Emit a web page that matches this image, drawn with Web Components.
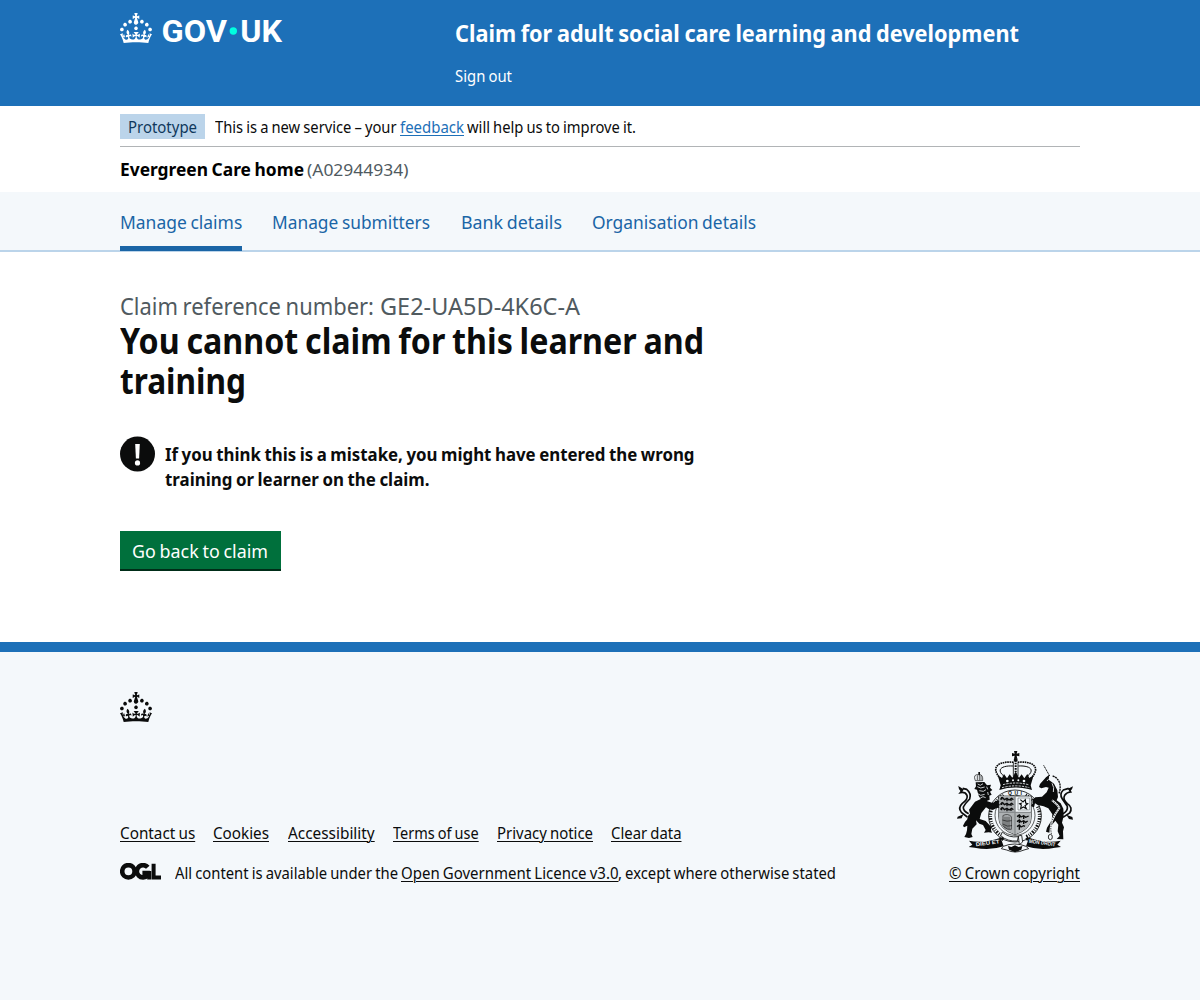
<!DOCTYPE html>
<html lang="en">
<head>
<meta charset="utf-8">
<title>You cannot claim for this learner and training</title>
<style>
  html, body { margin: 0; background: #f4f8fb; }
  body { font-family: "Noto Sans", "Liberation Sans", sans-serif; color: #0b0c0c; font-size: 16px; line-height: 20px; }
</style>
</head>
<body>
<claim-page></claim-page>
<script>
const define = (name, html, setup) => {
  const t = document.createElement('template');
  t.innerHTML = html;
  customElements.define(name, class extends HTMLElement {
    constructor() { super(); this.attachShadow({ mode: 'open' }).append(t.content.cloneNode(true)); }
    connectedCallback() { if (setup) setup(this, this.shadowRoot); }
  });
};

/* A single line of text condensed to a given advance width. */
define('fitted-text', `
<style>
  :host { display: inline-block; white-space: nowrap; word-spacing: -.05em; }
  span { display: inline-block; transform-origin: 0 50%; vertical-align: top; }
  :host([link]) span { text-decoration: underline; text-decoration-thickness: 1px; text-underline-offset: 2px; }
</style><span><slot></slot></span>`, (el, root) => {
  const w = +el.getAttribute('w');
  const span = root.querySelector('span');
  span.style.transform = `scaleX(${w / span.getBoundingClientRect().width})`;
  el.style.width = w + 'px';
});

define('crown-icon', `
<style>:host { display: block; width: 32px; height: 30px; } svg { display: block; }</style>
<svg width="32" height="30" viewBox="0 0 32 30" fill="currentColor"><path d="M22.6 10.4c-1 .4-2-.1-2.4-1-.4-.9.1-2 1-2.4.9-.4 2 .1 2.4 1s-.1 2-1 2.4m-5.9 6.7c-.9.4-2-.1-2.4-1-.4-.9.1-2 1-2.4.9-.4 2 .1 2.4 1s-.1 2-1 2.4m10.8-3.7c-1 .4-2-.1-2.4-1-.4-.9.1-2 1-2.4.9-.4 2 .1 2.4 1s0 2-1 2.4m3.3 4.8c-1 .4-2-.1-2.4-1-.4-.9.1-2 1-2.4.9-.4 2 .1 2.4 1s-.1 2-1 2.4M17 4.7l2.3 1.2V2.5l-2.3.7-.2-.2.9-3h-3.4l.9 3-.2.2c-.1.1-2.3-.7-2.3-.7v3.4L15 4.7c.1.1.1.2.2.2l-1.3 4c-.1.2-.1.4-.1.6 0 1.1.8 2 1.9 2.2h.7c1-.2 1.9-1.1 1.9-2.1 0-.2 0-.4-.1-.6l-1.3-4c-.1-.2 0-.2.1-.3m-7.6 5.7c.9.4 2-.1 2.4-1 .4-.9-.1-2-1-2.4-.9-.4-2 .1-2.4 1s0 2 1 2.4m-5 3c.9.4 2-.1 2.4-1 .4-.9-.1-2-1-2.4-.9-.4-2 .1-2.4 1s.1 2 1 2.4m-3.2 4.8c.9.4 2-.1 2.4-1 .4-.9-.1-2-1-2.4-.9-.4-2 .1-2.4 1s0 2 1 2.4m14.8 11c4.4 0 8.6.3 12.3.8 1.1-4.5 2.4-7 3.7-8.8l-2.5-.9c.2 1.3.3 1.9 0 2.7-.4-.4-.8-1.1-1.1-2.3l-1.2 4c.7-.5 1.3-.8 2-.9-1.1 2.5-2.6 3.1-3.5 3-1.1-.2-1.7-1.2-1.5-2.1.3-1.2 1.5-1.5 2.1-.1 1.1-2.3-.8-3-2-2.3 1.9-1.9 2.1-3.5.6-5.6-2.1 1.6-2.1 3.2-1.2 5.5-1.2-1.4-3.2-.6-2.5 1.6.9-1.4 2.1-.5 1.9.8-.2 1.1-1.7 2.1-3.5 1.9-2.7-.2-2.9-2.1-2.9-3.6.7-.1 1.9.5 2.9 1.9l.4-4.3c-1.1 1.1-2.1 1.4-3.2 1.4.4-1.2 2.1-3 2.1-3h-5.4s1.7 1.9 2.1 3c-1.1 0-2.1-.2-3.2-1.4l.4 4.3c1-1.4 2.2-2 2.9-1.9-.1 1.5-.2 3.4-2.9 3.6-1.9.2-3.4-.8-3.5-1.9-.2-1.3 1-2.2 1.9-.8.7-2.3-1.2-3-2.5-1.6.9-2.2.9-3.9-1.2-5.5-1.5 2-1.3 3.7.6 5.6-1.2-.7-3.1 0-2 2.3.6-1.4 1.8-1.1 2.1.1.2.9-.3 1.9-1.5 2.1-.9.2-2.4-.5-3.5-3 .6 0 1.2.3 2 .9l-1.2-4c-.3 1.1-.7 1.9-1.1 2.3-.3-.8-.2-1.4 0-2.7l-2.9.9C1.3 23 2.6 25.5 3.7 30c3.7-.5 7.9-.8 12.3-.8"/></svg>`);

define('govuk-logo', `
<style>:host { display: flex; gap: 10px; color: #fff; } svg { display: block; }</style>
<crown-icon></crown-icon>
<svg width="130" height="44" viewBox="0 0 130 44" fill="#fff" font-family="Roboto, 'Liberation Sans', sans-serif" font-weight="700" font-size="30.5">
  <text x="-.5" y="28.8" textLength="65.5" lengthAdjust="spacingAndGlyphs">GOV</text>
  <text x="78.3" y="28.8" textLength="41.7" lengthAdjust="spacingAndGlyphs">UK</text>
  <circle cx="71.3" cy="18" r="3.7" fill="#00ffe0"/>
</svg>`);

define('site-header', `
<style>
  :host { display: block; background: #1d70b8; color: #fff; height: 106px; }
  .wrap { width: 960px; margin: 0 auto; display: flex; }
  govuk-logo { width: 335px; padding-top: 13px; }
  .content { display: flex; flex-direction: column; align-items: flex-start; padding-top: 18px; gap: 18px; }
  .title { font-size: 23.5px; line-height: 30px; font-weight: 700; }
  .nav { font-size: 15.5px; line-height: 20px; }
</style>
<header class="wrap"><govuk-logo></govuk-logo>
  <div class="content">
    <fitted-text class="title" w="564">Claim for adult social care learning and development</fitted-text>
    <fitted-text class="nav" w="57">Sign out</fitted-text>
  </div>
</header>`);

define('phase-banner', `
<style>
  :host { display: flex; width: 960px; height: 25px; margin: 0 auto; padding: 8px 0 7px; border-bottom: 1px solid #b1b4b6; line-height: 26px; font-size: 15.5px; }
  .tag { background: #bbd4ea; color: #0f385c; padding: 0 8px; margin-right: 10px; height: 25px; }
  .fb { color: #1d70b8; }
  .gap { width: 3px; }
</style>
<span class="tag"><fitted-text w="69">Prototype</fitted-text></span>
<fitted-text w="181.5">This is a new service – your</fitted-text><span class="gap"></span>
<fitted-text link class="fb" w="64">feedback</fitted-text><span class="gap"></span>
<fitted-text w="169">will help us to improve it.</fitted-text>`);

define('org-bar', `
<style>
  :host { display: flex; width: 960px; height: 36px; margin: 0 auto; padding-top: 9px; line-height: 25px; font-size: 18.5px; gap: 3px; }
  b { color: #000; } .id { font-size: 16px; color: #505a5f; padding-top: 2px; height: 25px; }
</style>
<b><fitted-text w="184">Evergreen Care home</fitted-text></b><fitted-text class="id" w="101.5">(A02944934)</fitted-text>`);

define('service-nav', `
<style>
  :host { display: block; background: #f4f8fb; border-bottom: 2px solid #bbd4ea; height: 58px; }
  nav { display: flex; gap: 30.2px; width: 960px; margin: 0 auto; color: #1a65a6; font-size: 18.5px; line-height: 25px; }
  fitted-text { padding-top: 16.5px; height: 37px; }
  .on { border-bottom: 5px solid #1a65a6; }
</style>
<nav><fitted-text class="on" w="122.3">Manage claims</fitted-text><fitted-text w="158">Manage submitters</fitted-text><fitted-text w="101">Bank details</fitted-text><fitted-text w="164">Organisation details</fitted-text></nav>`);

define('warning-text', `
<style>
  :host { display: flex; gap: 10px; font-size: 18.5px; line-height: 25px; font-weight: 700; }
  svg { display: block; } .lines { display: flex; flex-direction: column; padding-top: 5px; }
</style>
<svg width="35" height="36" viewBox="0 0 35 36"><circle cx="17.5" cy="18" r="17.5" fill="#0b0c0c"/><path d="M15.2 8h4.6l-.7 14.5h-3.2z" fill="#fff"/><circle cx="17.5" cy="26.9" r="2.6" fill="#fff"/></svg>
<div class="lines"><slot></slot></div>`);

define('start-button', `
<style>
  :host { display: inline-block; }
  button { display: block; margin: 0; border: 0; border-radius: 0; padding: 7px 12px 6px; height: 38px; width: 161px; background: #00703c; color: #fff; box-shadow: 0 2px 0 #002d18; font: inherit; font-size: 18.5px; line-height: 25px; text-align: left; }
</style>
<button type="button"><slot></slot></button>`);

define('claim-main', `
<style>
  :host { display: block; background: #fff; height: 389.5px; }
  main { width: 960px; margin: 0 auto; padding-top: 39px; display: flex; flex-direction: column; align-items: flex-start; }
  .caption { display: flex; gap: 6px; font-size: 23.5px; line-height: 30px; color: #505a5f; }
  h1 { margin: 0; font-size: 35px; line-height: 40px; font-weight: 700; display: flex; flex-direction: column; align-items: flex-start; }
  warning-text { margin-top: 35px; }
  start-button { margin-top: 39.5px; }
</style>
<main>
  <div class="caption"><fitted-text w="254">Claim reference number:</fitted-text><fitted-text w="200">GE2-UA5D-4K6C-A</fitted-text></div>
  <h1><fitted-text w="584">You cannot claim for this learner and</fitted-text><fitted-text w="126">training</fitted-text></h1>
  <warning-text><fitted-text w="529.5">If you think this is a mistake, you might have entered the wrong</fitted-text><fitted-text w="264.5">training or learner on the claim.</fitted-text></warning-text>
  <start-button><fitted-text w="136">Go back to claim</fitted-text></start-button>
</main>`);

define('royal-arms', `
<style>:host { display: block; width: 120px; height: 104px; } svg { display: block; }</style>
<svg width="120" height="104" viewBox="45 30 360 312" fill="#0b0c0c">
  <!-- imperial crown -->
  <path d="M222 33h10l-2 8 8-2v10l-8-2 2 9h-10l2-9-8 2V39l8 2z"/>
  <circle cx="227" cy="60" r="6"/>
  <g fill="none" stroke="#0b0c0c">
    <path d="M182 116C146 78 182 62 223 67M272 116c36-38 0-54-41-49" stroke-width="5" stroke-dasharray="5 2"/>
    <path d="M191 108c-24-20-4-32 28-30M263 108c24-20 4-32-28-30" stroke-width="3"/>
    <path d="M220 68v40M234 68v40" stroke-width="2.5"/>
    <path d="M227 68v36" stroke-width="6" stroke-dasharray="5 3"/>
  </g>
  <path d="M173 106l13 8 6-12 9 13 8-12 8 10 10-18 10 18 8-10 8 12 9-13 6 12 13-8-9 30 4 14c-30-10-68-10-98 0l4-14z"/>
  <path d="M189 134q38-10 76 0M186 143q41-11 82 0" stroke="#f4f8fb" stroke-width="2.5" stroke-dasharray="7 3" fill="none"/>
  <g fill="#f4f8fb"><circle cx="202" cy="123" r="4"/><circle cx="219" cy="121" r="3"/><circle cx="235" cy="121" r="3"/><circle cx="252" cy="123" r="4"/></g>
  <!-- garter -->
  <g fill="none" stroke="#0b0c0c">
    <ellipse cx="225" cy="228" rx="79" ry="78" stroke-width="2.5"/>
    <ellipse cx="225" cy="226" rx="60" ry="60" stroke-width="2"/>
    <path d="M157 200a69 69 0 0 0 34 90M293 200a69 69 0 0 1-34 90M168 187a69 69 0 0 1 25-22M257 165a69 69 0 0 1 25 22" stroke-width="10" stroke-dasharray="3 4 2 4 5 4"/>
  </g>
  <text x="204" y="165" font-family="Liberation Sans, sans-serif" font-weight="700" font-size="15" textLength="42">QUI</text>
  <!-- quartered shield -->
  <path d="M176 168h98v64q0 36-49 52-49-16-49-52z" fill="#f4f8fb" stroke="#0b0c0c" stroke-width="2"/>
  <path d="M177 169h48v47h-48z" fill="#a9adaf"/>
  <path d="M225 216h47v18q0 32-47 48z" fill="#b4b8ba"/>
  <path d="M177 218h48v64q-48-16-48-50z" fill="#aeb2b4"/>
  <path d="M225 166v117M176 217h98" stroke="#888c8e" stroke-width="4"/>
  <g fill="none" stroke="#0b0c0c" stroke-width="4">
    <path d="M181 178l7-5 5 6 8-4 6 5 8-5 5 4M181 193l7-5 5 6 8-4 6 5 8-5 5 4M181 208l7-5 5 6 8-4 6 5 8-5 5 4M185 171v8M201 177v7M213 175v8M185 187v8M201 192v7M213 190v8M185 202v9M201 207v7M213 205v8"/>
    <path d="M231 230l7-5 5 6 8-4 6 5 9-4M231 245l7-5 5 6 8-4 6 5 6-4M231 260l7-5 5 6 8-4 4 2M238 225v10M251 227v10M238 240v10M251 242v10M238 255v14"/>
    <path d="M234 174h35v36h-35z" stroke="#777b7d" stroke-width="2"/>
    <path d="M241 179l8 7 7-7 1 10 6 2-8 6 4 9-9-5-8 5 2-11-5-4 7-2" stroke-width="3.5"/>
    <path d="M188 227q16-8 26 3M189 228v30q12 14 25 10v-38M195 230v35M201 230v37M207 230v38M187 240q14 6 28 2M188 252q14 10 28 5" stroke-width="1.8"/>
  </g>
  <path d="M187 276q18 18 48 14l-3 13q-30 2-50-16zM235 288l10-2 3 20-10 8z" fill="#f4f8fb" stroke="#0b0c0c" stroke-width="2.5"/>
  <!-- lion -->
  <g>
    <path d="M106 122q-8-20 10-18 14-2 12 18zM112 106v14M118 103v18M123 106v14" fill="none" stroke="#0b0c0c" stroke-width="2"/>
    <path d="M115 96h5v8h-5z"/>
    <path d="M107 127l26-1 8 10 12-2-3 9 7 7-7 5 5 9-7 3 1 12-9 4 18 6 14-8 6 3-2 6 4 5-4 2 2 6-8 1-10 5-14-2-8-5-14 17-5 18 18 6 17 18-1 10 3 7-10-1-14 1 5-8-8-15-11-4-10-10 2 12-13 13-3 16 4 9-11 3-14-3 5-9 3-11 1-14-10 5-3-5 6-11 7-8 1-9 7-8-3-12 18-24 17-8-6-10-5-18-8-2 5-8z"/>
    <path d="M113 132l8 4 8-5M112 140l10 4 12-3M118 152l12 2 8-5M108 158l14 8 12-3M121 174l8-4 8 3M140 140l3 8M143 156l2 9" fill="none" stroke="#f4f8fb" stroke-width="2.4"/>
    <path d="M82 231l-18-14q-11-14 3-27 18-12 14-24-5-11-20-8l8-10M68 145l12 3q15 12 9 29-14 14-19 24-1 12 16 20" fill="none" stroke="#0b0c0c" stroke-width="5"/>
    <path d="M55 138l13 8-5 9q-8-6-8-17M53 230l17-7-5 12-14 1z"/>
  </g>
  <!-- unicorn -->
  <g>
    <path d="M311 76l18 32" stroke="#0b0c0c" stroke-width="3" stroke-dasharray="4 1.5"/>
    <path d="M328 104l-10 8-18 20-3 9 7 4 14-4 8 2-6 14-14 13-20 2-9 7 2 9-6 10 9 4 3-12 8 5 18 4 14 6 12 18-2 18-14 22-3 12 10 3 2-16 16-20 9 12-2 20 6 14-9 9 20 1-1-24 3-12-6-14 5-20-1-22-8-16-12-9 4-10-2-20-10-20-16-12z"/>
    <path d="M338 112l8 6M346 122l8 7M350 134l8 7M351 146l7 6M336 130q8 12 4 26M325 118l-4 5" stroke="#f4f8fb" stroke-width="2.6" fill="none"/>
    <path d="M338 108q18 6 22 26 2 16-4 28" fill="none" stroke="#0b0c0c" stroke-width="4" stroke-dasharray="6 2"/>
    <path d="M336 181q18 14 22 23-14 19-21 36-8 25-2 43" stroke="#f4f8fb" stroke-width="6" fill="none"/>
    <path d="M336 181q18 14 22 23-14 19-21 36-8 25-2 43" stroke="#0b0c0c" stroke-width="2.5" stroke-dasharray="4 3" fill="none"/>
    <ellipse cx="331" cy="291" rx="6" ry="8" fill="none" stroke="#0b0c0c" stroke-width="2.5"/>
    <path d="M369 232l20-13q11-16-7-28-15-13-8-25 7-10 18-10l-5-11M386 145l-16 5q-13 12-3 27l15 22q2 14-13 22" fill="none" stroke="#0b0c0c" stroke-width="5"/>
    <path d="M399 139l-15 7 5 9q9-6 10-16M397 231l-18-7 8 13 12 2z"/>
  </g>
  <!-- motto ribbon -->
  <path d="M87 302q42 10 95-9l9 26q-43 14-87 4l-18-2 11-7zM362 302q-42 10-95-9l-9 26q43 14 87 4l18-2-11-7z"/>
  <g fill="#f4f8fb" font-family="Liberation Sans, sans-serif" font-weight="700" font-size="16">
    <text transform="translate(108 319) rotate(-7)" textLength="72" lengthAdjust="spacingAndGlyphs">DIEU ET</text>
    <text transform="translate(266 308) rotate(8)" textLength="80" lengthAdjust="spacingAndGlyphs">MON DROIT</text>
  </g>
  <path d="M190 319q34-14 68 0l8 7-14 4q-26 12-52 0l-16-4z" fill="#f4f8fb" stroke="#0b0c0c" stroke-width="2.5"/>
  <path d="M204 318l10 3 11-5 11 5 11-3-3 11-19 8-18-8zM176 292l17 3-5 8zM273 292l-17 3 5 8z"/>
</svg>`);

define('site-footer', `
<style>
  :host { display: block; border-top: 10px solid #1d70b8; background: #f4f8fb; height: 348px; }
  .wrap { width: 960px; margin: 0 auto; padding-top: 40px; }
  .row { display: flex; justify-content: space-between; align-items: flex-end; margin-top: 28.5px; }
  .links { display: flex; gap: 18.3px; margin-bottom: 20px; }
  .meta { font-size: 15.5px; line-height: 20px; }
  .licence { display: flex; align-items: flex-start; }
  .licence svg { display: block; margin: 0 13.5px 0 0; }
  .gap { width: 3px; }
  .crest { display: flex; flex-direction: column; align-items: flex-end; font-size: 15.5px; line-height: 20px; }
  royal-arms { margin: 0 5px 9px 0; }
</style>
<footer class="wrap">
  <crown-icon></crown-icon>
  <div class="row">
    <div class="meta">
      <div class="links"><fitted-text link w="75.2">Contact us</fitted-text><fitted-text link w="56">Cookies</fitted-text><fitted-text link w="86.7">Accessibility</fitted-text><fitted-text link w="85.7">Terms of use</fitted-text><fitted-text link w="96">Privacy notice</fitted-text><fitted-text link w="70.5">Clear data</fitted-text></div>
      <div class="licence">
        <svg width="41" height="18" viewBox="0 .5 41 18" fill="none" stroke="#0b0c0c" stroke-width="4.6"><circle cx="8.4" cy="8.8" r="6.2"/><path d="M27.8 4.8A6.2 6.2 0 1 0 27.6 13V10.6H22.4"/><path d="M29.2 8.6V17M33.6 1.2V15H41" stroke-width="4"/></svg>
        <fitted-text w="223">All content is available under the</fitted-text><span class="gap"></span><fitted-text link w="217.5">Open Government Licence v3.0</fitted-text><fitted-text w="218">, except where otherwise stated</fitted-text>
      </div>
    </div>
    <div class="crest"><royal-arms></royal-arms><fitted-text link w="131">© Crown copyright</fitted-text></div>
  </div>
</footer>`);

define('claim-page', `
<style>:host { display: block; } .top { background: #fff; }</style>
<site-header></site-header>
<div class="top"><phase-banner></phase-banner><org-bar></org-bar></div>
<service-nav></service-nav>
<claim-main></claim-main>
<site-footer></site-footer>`);
</script>
</body>
</html>
